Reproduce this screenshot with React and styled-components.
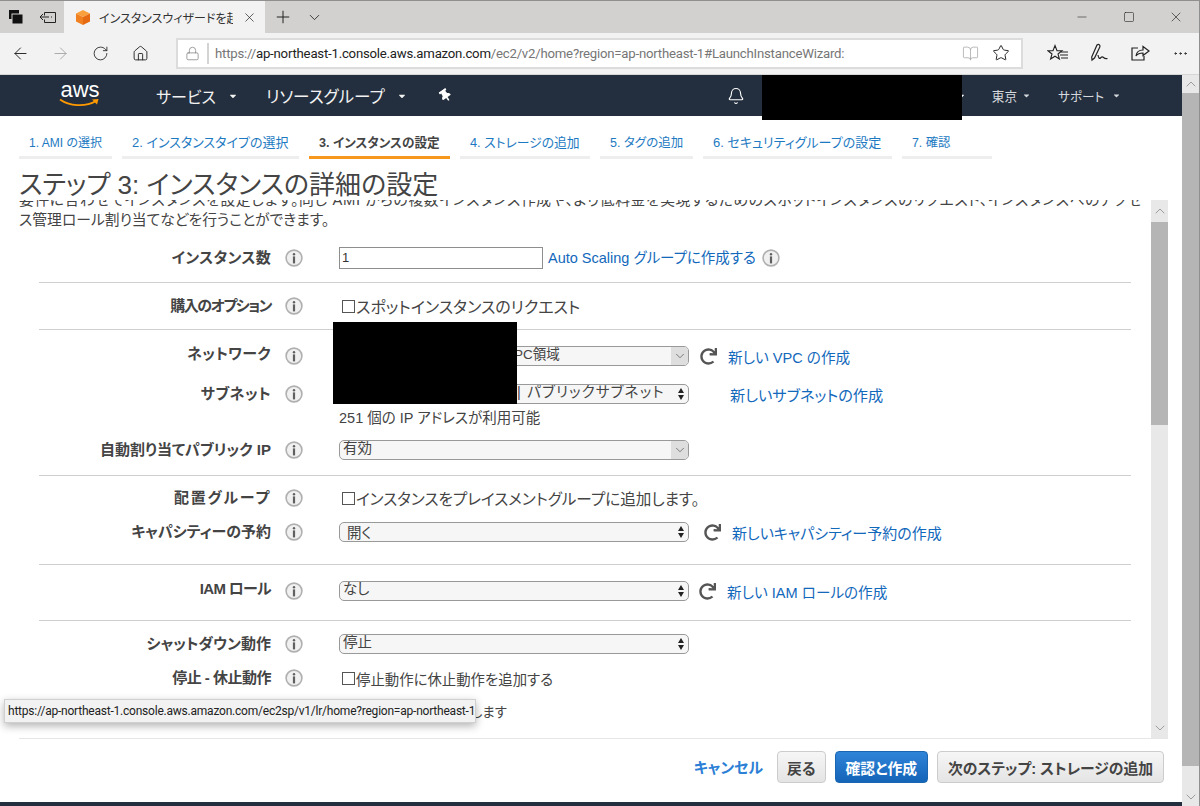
import React from 'react';
import styled, { createGlobalStyle } from 'styled-components';
import {
  ArrowLeft, ArrowRight, RotateCw, Home, Lock, Star, X, Plus, ChevronDown, ChevronUp,
  Minus, Square, MoreHorizontal, BookOpen, Bell,
} from 'lucide-react';
import { FaRedo, FaThumbtack, FaCaretDown } from 'react-icons/fa';

const GlobalStyle = createGlobalStyle`
  html, body {
    margin: 0;
    padding: 0;
    overflow: hidden;
    background: #fff;
  }
  body {
    font-family: "Liberation Sans", "Noto Sans CJK JP", sans-serif;
    font-feature-settings: "palt";
    color: #444;
  }
`;

const Shell = styled.div`
  position: relative;
  width: 1200px;
  height: 806px;
  box-sizing: border-box;
  border-top: 1px solid #8f8f8f;
  border-right: 1px solid #8f8f8f;
  display: flex;
  flex-direction: column;
  overflow: hidden;
`;

const TabStrip = styled.div`
  height: 32px;
  flex: none;
  display: flex;
  align-items: center;
  background: #d2d1cf;
  color: #222;
`;

const StripIcon = styled.div`
  width: ${(p) => p.$w || 32}px;
  height: 32px;
  flex: none;
  display: flex;
  align-items: center;
  justify-content: center;
`;

const ActiveTab = styled.div`
  width: 201px;
  height: 32px;
  flex: none;
  display: flex;
  align-items: center;
  background: #f2f2f2;
  padding-left: 11px;
  box-sizing: border-box;
`;

const TabTitle = styled.div`
  width: 134px;
  margin-left: 8px;
  font-size: 12px;
  white-space: nowrap;
  overflow: hidden;
  color: #333;
`;

const WindowControls = styled.div`
  margin-left: auto;
  display: flex;
`;

const WindowButton = styled.div`
  width: 47px;
  height: 32px;
  display: flex;
  align-items: center;
  justify-content: center;
`;

const Toolbar = styled.div`
  height: 42px;
  flex: none;
  box-sizing: border-box;
  display: flex;
  align-items: center;
  background: #f2f2f2;
  padding: 0 0 1px 0;
  border-bottom: 1px solid #d6d6d6;
  color: #222;
`;

const ToolButton = styled.div`
  width: ${(p) => p.$w || 40}px;
  flex: none;
  display: flex;
  align-items: center;
  justify-content: center;
  color: ${(p) => p.$muted ? '#a8a8a8' : '#222'};
`;

const AddressBar = styled.div`
  width: 847px;
  height: 31px;
  flex: none;
  margin: 0 15px 0 16px;
  box-sizing: border-box;
  background: #fff;
  border: 2px solid #dcdcdc;
  display: flex;
  align-items: center;
`;

const LockBox = styled.div`
  width: 29px;
  height: 21px;
  flex: none;
  border-right: 2px solid #d4d4d4;
  display: flex;
  align-items: center;
  justify-content: center;
  color: #8a8a8a;
`;

const UrlText = styled.div`
  flex: 1;
  margin-left: 6px;
  font-family: "Roboto", sans-serif;
  font-size: 13.2px;
  letter-spacing: -0.22px;
  color: #767676;
  white-space: nowrap;
  b {
    font-weight: 400;
    color: #222;
  }
`;

const Body = styled.div`
  flex: 1;
  min-height: 0;
  display: flex;
`;

const Page = styled.div`
  flex: 1;
  min-width: 0;
  display: flex;
  flex-direction: column;
`;

const ScrollTrack = styled.div`
  width: ${(p) => p.$w}px;
  flex: none;
  background: #e8e8e8;
  display: flex;
  flex-direction: column;
  color: #777;
`;

const ScrollArrow = styled.div`
  height: ${(p) => p.$h}px;
  flex: none;
  display: flex;
  align-items: center;
  justify-content: center;
  margin-top: ${(p) => p.$end ? 'auto' : 0};
`;

const ScrollThumb = styled.div`
  height: ${(p) => p.$h}px;
  flex: none;
  background: #b5b5b5;
`;

const NavBar = styled.nav`
  position: relative;
  height: 41px;
  flex: none;
  display: flex;
  align-items: center;
  background: #232f3e;
  color: #eee;
`;

const Logo = styled.div`
  width: 40px;
  margin: 0 56px 0 60px;
  display: flex;
  flex-direction: column;
  align-items: center;
  color: #fff;
  line-height: 17px;
  font-size: 22px;
  span {
    margin-top: -3px;
  }
`;

const NavItem = styled.div`
  display: flex;
  align-items: center;
  gap: ${(p) => p.$gap || 12}px;
  margin-left: ${(p) => p.$ml || 0}px;
  font-size: ${(p) => p.$small ? 12.6 : 16}px;
  color: ${(p) => p.$small ? '#d5d9dd' : '#f2f2f2'};
  white-space: nowrap;
`;

const ResourceLabel = styled.span`
  font-size: 16.6px;
`;

const NavIcon = styled.div`
  margin-left: ${(p) => p.$ml}px;
  display: flex;
  color: #fff;
  transform: rotate(${(p) => p.$turn || 0}deg);
`;

const Redaction = styled.div`
  position: absolute;
  left: ${(p) => p.$x}px;
  top: ${(p) => p.$y}px;
  width: ${(p) => p.$w}px;
  height: ${(p) => p.$h}px;
  background: #000;
`;

const Steps = styled.div`
  display: flex;
  gap: 10px;
  flex: none;
  margin: 14px 0 0 19px;
`;

const Step = styled.div`
  width: ${(p) => p.$w}px;
  height: 29px;
  box-sizing: border-box;
  padding: 0 0 3px 10px;
  display: flex;
  align-items: center;
  font-size: ${(p) => p.$size}px;
  white-space: nowrap;
  color: ${(p) => p.$active ? '#444' : '#1d7ac2'};
  font-weight: ${(p) => p.$active ? 700 : 400};
  border-bottom: 3px solid ${(p) => p.$active ? '#f7981d' : '#eeeeee'};
`;

const Title = styled.h1`
  position: relative;
  z-index: 1;
  height: 41px;
  flex: none;
  box-sizing: border-box;
  margin: 0 0 0 19px;
  padding-top: 9px;
  font-size: 26px;
  line-height: 34px;
  font-weight: 400;
  color: #444;
  white-space: nowrap;
`;

const Panel = styled.div`
  height: 538px;
  flex: none;
  margin: 0 14px 0 19px;
  display: flex;
  border-bottom: 1px solid #e6e6e6;
`;

const PanelContent = styled.div`
  flex: 1;
  min-width: 0;
  overflow: hidden;
`;

const Description = styled.p`
  margin: -10px 0 0;
  height: 42px;
  font-size: 14.8px;
  line-height: 20px;
  color: #444;
  white-space: nowrap;
`;

const DescriptionLead = styled.span`
  letter-spacing: 0.58px;
`;

const Section = styled.div`
  margin: 0 20px;
  box-sizing: border-box;
  padding-top: ${(p) => p.$top}px;
  height: ${(p) => p.$height}px;
  border-bottom: ${(p) => p.$last ? 'none' : '1px solid #cfcfcf'};
`;

const Row = styled.div`
  display: flex;
  align-items: center;
  height: ${(p) => p.$h || 20}px;
  margin-top: ${(p) => p.$gap || 0}px;
`;

const Label = styled.div`
  width: 232px;
  flex: none;
  text-align: right;
  font-size: 15px;
  font-weight: 700;
  letter-spacing: ${(p) => p.$ls || 0}px;
  color: #444;
  white-space: nowrap;
  margin-bottom: ${(p) => p.$lift || 4}px;
`;

const InfoSlot = styled.div`
  width: ${(p) => p.$w || 68}px;
  flex: none;
  padding-left: ${(p) => p.$pl || 14}px;
  box-sizing: border-box;
  display: flex;
  align-items: center;
`;

const TextInput = styled.div`
  width: 204px;
  height: 22px;
  box-sizing: border-box;
  border: 1px solid #8e8e8e;
  padding-left: 2px;
  font-size: 13px;
  line-height: 20px;
  color: #333;
`;

const LinkText = styled.a`
  color: #1268bb;
  font-size: ${(p) => p.$size || 15}px;
  white-space: nowrap;
  margin-left: ${(p) => p.$ml || 0}px;
  margin-bottom: ${(p) => p.$lift || 0}px;
`;

const Plain = styled.div`
  font-size: 14.5px;
  color: #444;
  white-space: nowrap;
`;

const CheckRow = styled.div`
  display: flex;
  align-items: center;
  margin-left: 3px;
  font-size: ${(p) => p.$size || 15.5}px;
  color: #444;
  white-space: nowrap;
`;

const CheckBox = styled.span`
  width: 13px;
  height: 13px;
  box-sizing: border-box;
  border: 1px solid #555;
  background: #fff;
  margin-right: 1px;
`;

const SelectBox = styled.div`
  width: 350px;
  height: 20px;
  flex: none;
  box-sizing: border-box;
  border: 1px solid #999999;
  border-radius: 5px;
  background: #f6f6f6;
  display: flex;
  align-items: center;
  justify-content: space-between;
  overflow: hidden;
  color: #444;
`;

const SelectValue = styled.span`
  padding-left: ${(p) => p.$indent || 3}px;
  margin-bottom: ${(p) => p.$lift ?? 7}px;
  font-size: ${(p) => p.$size || 14.5}px;
  letter-spacing: ${(p) => p.$ls || 0}px;
  white-space: nowrap;
`;

const ChevronButton = styled.span`
  width: 17px;
  height: 18px;
  flex: none;
  background: #dedede;
  display: flex;
  align-items: center;
  justify-content: center;
  color: #333;
`;

const Spinner = styled.span`
  width: 13px;
  flex: none;
  display: flex;
  flex-direction: column;
  align-items: center;
  gap: 2px;
  margin-right: 1px;
  &::before, &::after {
    content: "";
    border-left: 3.5px solid transparent;
    border-right: 3.5px solid transparent;
  }
  &::before {
    border-bottom: 5px solid #222;
  }
  &::after {
    border-top: 5px solid #222;
  }
`;

const Refresh = styled.span`
  display: flex;
  margin-left: ${(p) => p.$ml}px;
  color: #555;
`;

const Footer = styled.div`
  flex: 1;
  display: flex;
  justify-content: flex-end;
  align-items: flex-start;
  gap: 9px;
  padding: 12px 18px 0 0;
`;

const CancelLink = styled.a`
  align-self: flex-start;
  margin: 5px 5px 0 0;
  color: #2b80d6;
  font-size: 15px;
  font-weight: 700;
`;

const Button = styled.button`
  height: 32px;
  box-sizing: border-box;
  padding: 0 ${(p) => p.$pad}px;
  border-radius: 4px;
  border: 1px solid ${(p) => p.$primary ? '#1a66b0' : '#cccccc'};
  background: ${(p) => p.$primary
    ? 'linear-gradient(#3084d8, #1464b8)'
    : 'linear-gradient(#f6f6f6, #e4e4e4)'};
  color: ${(p) => p.$primary ? '#fff' : '#444'};
  font-family: inherit;
  font-feature-settings: inherit;
  font-size: 14.8px;
  font-weight: 700;
  white-space: nowrap;
`;

const BottomBar = styled.div`
  height: 4px;
  flex: none;
  background: #232f3e;
`;

const StatusTip = styled.div`
  position: absolute;
  left: 4px;
  top: 698px;
  width: 472px;
  height: 24px;
  box-sizing: border-box;
  padding-left: 3px;
  background: #f2f2f2;
  border: 1px solid #d0d0d0;
  box-shadow: 0 3px 8px rgba(0, 0, 0, 0.3);
  font-family: "Roboto", sans-serif;
  font-size: 12px;
  letter-spacing: -0.22px;
  line-height: 22px;
  color: #222;
  white-space: nowrap;
`;

function InfoIcon() {
  return (
    <svg width="18" height="18" viewBox="0 0 18 18">
      <circle cx="9" cy="9" r="7.9" fill="#f0f0f0" stroke="#b0b0b0" strokeWidth="1.6" />
      <circle cx="9" cy="5.200" r="1.2" fill="#5f5f5f" />
      <rect x="7.900" y="7.400" width="2.200" height="7" fill="#5f5f5f" />
    </svg>
  );
}

function Info() {
  return <InfoSlot><InfoIcon /></InfoSlot>;
}

function Select({ children, indent, spinner, size, ls, lift }) {
  return (
    <SelectBox>
      <SelectValue $indent={indent} $size={size} $ls={ls} $lift={lift}>{children}</SelectValue>
      {spinner ? <Spinner /> : <ChevronButton><ChevronDown size={14} strokeWidth={1} /></ChevronButton>}
    </SelectBox>
  );
}

function Check({ children, size }) {
  return <CheckRow $size={size}><CheckBox />{children}</CheckRow>;
}

function Reload({ ml }) {
  return <Refresh $ml={ml}><FaRedo size={17} /></Refresh>;
}

function TabsIcon() {
  return (
    <svg width="16" height="16" viewBox="0 0 16 16">
      <rect x="1" y="1" width="10" height="9" fill="#111" />
      <rect x="4" y="5" width="11" height="10" fill="#111" stroke="#d2d1cf" strokeWidth="1" />
    </svg>
  );
}

function SetAsideIcon() {
  return (
    <svg width="18" height="16" viewBox="0 0 18 16" fill="none" stroke="#222" strokeWidth="1">
      <path d="M5.500 3.500h11v10h-11v-3M5.500 6.500V3.500" />
      <path d="M1 8h9M4 5 1 8l3 3M13 8h-1" />
    </svg>
  );
}

function Cube() {
  return (
    <svg width="16" height="17" viewBox="0 0 16 17">
      <path d="M8 1 15 4.500 8 8 1 4.500Z" fill="#f9a03c" />
      <path d="M1 4.500 8 8v8l-7-3.500Z" fill="#f08020" />
      <path d="M15 4.500 8 8v8l7-3.500Z" fill="#e56a12" />
    </svg>
  );
}

function FavoritesIcon() {
  return (
    <svg width="22" height="20" viewBox="0 0 22 20" fill="none" stroke="#222" strokeWidth="1.1">
      <path d="M8 2.500 10 7.600l5 .2-4 3.200 1.400 5L8 13.200 3.600 16 5 11 1 7.800l5-.2Z" />
      <path d="M14 9h7M13 12h8M14 15h7" />
    </svg>
  );
}

function PenIcon() {
  return (
    <svg width="22" height="20" viewBox="0 0 22 20" fill="none" stroke="#222" strokeWidth="1.2">
      <path d="M8 2c2-1.500 3.500.5 2.800 2L5.500 15 3 17l-.3-3Z" />
      <path d="M9 12c.5 3 1.500 4 2.500 3s2-1.500 3-.5 2 1.500 4 1" />
    </svg>
  );
}

function ShareIcon() {
  return (
    <svg width="20" height="20" viewBox="0 0 20 20" fill="none" stroke="#222" strokeWidth="1.2">
      <path d="M8 5H2v12h12v-4" />
      <path d="M6 13c.5-4 3.500-6 7-6V3.500L19 8l-6 4.500V10c-3 0-5.500.8-7 3Z" />
    </svg>
  );
}

function Smile() {
  return (
    <svg width="42" height="10" viewBox="0 0 42 10" fill="none">
      <path d="M1 1.500C10 8 26 9.500 37 3" stroke="#f90" strokeWidth="1.800" />
      <path d="M33 1.500 39.500 1 38 6.500Z" fill="#f90" />
    </svg>
  );
}

const steps = [
  { text: '1. AMI の選択', w: 93, size: 12 },
  { text: '2. インスタンスタイプの選択', w: 177, size: 13 },
  { text: '3. インスタンスの設定', w: 141, size: 12.6, active: true },
  { text: '4. ストレージの追加', w: 130, size: 12.8 },
  { text: '5. タグの追加', w: 93, size: 12.5 },
  { text: '6. セキュリティグループの設定', w: 189, size: 13 },
  { text: '7. 確認', w: 90, size: 12.3 },
];

export default function App() {
  return (
    <>
      <GlobalStyle />
      <Shell>
        <TabStrip>
          <StripIcon><TabsIcon /></StripIcon>
          <StripIcon $w={32}><SetAsideIcon /></StripIcon>
          <ActiveTab>
            <Cube />
            <TabTitle>インスタンスウィザードを起動</TabTitle>
            <StripIcon $w={32}><X size={15} strokeWidth={1.1} /></StripIcon>
          </ActiveTab>
          <StripIcon $w={36}><Plus size={20} strokeWidth={1.2} /></StripIcon>
          <StripIcon $w={26}><ChevronDown size={17} strokeWidth={1.2} /></StripIcon>
          <WindowControls>
            <WindowButton><Minus size={14} strokeWidth={1} /></WindowButton>
            <WindowButton><Square size={12} strokeWidth={1.2} /></WindowButton>
            <WindowButton><X size={16} strokeWidth={1} /></WindowButton>
          </WindowControls>
        </TabStrip>

        <Toolbar>
          <ToolButton><ArrowLeft size={19} strokeWidth={1.2} /></ToolButton>
          <ToolButton $muted><ArrowRight size={19} strokeWidth={1.2} /></ToolButton>
          <ToolButton><RotateCw size={17} strokeWidth={1.2} /></ToolButton>
          <ToolButton><Home size={17} strokeWidth={1.3} /></ToolButton>
          <AddressBar>
            <LockBox><Lock size={15} strokeWidth={1.3} /></LockBox>
            <UrlText>https://<b>ap-northeast-1.console.aws.amazon.com</b>/ec2/v2/home?region=ap-northeast-1#LaunchInstanceWizard:</UrlText>
            <ToolButton $muted $w={30}><BookOpen size={17} strokeWidth={1.1} /></ToolButton>
            <ToolButton $w={32}><Star size={18} strokeWidth={1.3} /></ToolButton>
            <ToolButton $w={4} />
          </AddressBar>
          <ToolButton $w={40}><FavoritesIcon /></ToolButton>
          <ToolButton $w={44}><PenIcon /></ToolButton>
          <ToolButton $w={36}><ShareIcon /></ToolButton>
          <ToolButton $w={44}><MoreHorizontal size={17} strokeWidth={1.4} /></ToolButton>
        </Toolbar>

        <Body>
          <Page>
            <NavBar>
              <Logo>
                <span>aws</span>
                <Smile />
              </Logo>
              <NavItem>サービス<FaCaretDown size={10} /></NavItem>
              <NavItem $ml={28}><ResourceLabel>リソースグループ</ResourceLabel><FaCaretDown size={10} /></NavItem>
              <NavIcon $ml={32} $turn={-35}><FaThumbtack size={13} /></NavIcon>
              <NavIcon $ml={275}><Bell size={18} strokeWidth={1.5} /></NavIcon>
              <NavIcon $ml={211}><FaCaretDown size={10} /></NavIcon>
              <NavItem $small $ml={26} $gap={5}>東京<FaCaretDown size={9} /></NavItem>
              <NavItem $small $ml={27} $gap={8}>サポート<FaCaretDown size={9} /></NavItem>
              <Redaction $x={762} $y={0} $w={200} $h={45} />
            </NavBar>

            <Steps>
              {steps.map((s) => (
                <Step key={s.text} $w={s.w} $size={s.size} $active={s.active}>{s.text}</Step>
              ))}
            </Steps>

            <Title>ステップ 3: インスタンスの詳細の設定</Title>

            <Panel>
              <PanelContent>
                <Description>
                  <DescriptionLead>要件に合わせてインスタンスを設定します。同じ AMI からの複数インスタンス作成や、より低料金を実現するためのスポットインスタンスのリクエスト、インスタンスへのアクセ</DescriptionLead>
                  <br />
                  ス管理ロール割り当てなどを行うことができます。
                </Description>

                <Section $top={15} $height={51}>
                  <Row $h={22}>
                    <Label $ls={0.3}>インスタンス数</Label>
                    <Info />
                    <TextInput>1</TextInput>
                    <LinkText $ml={5} $size={14.5} $lift={3}>Auto Scaling グループに作成する</LinkText>
                    <InfoSlot $w={24} $pl={6}><InfoIcon /></InfoSlot>
                  </Row>
                </Section>

                <Section $top={13} $height={47}>
                  <Row>
                    <Label $ls={-1.5}>購入のオプション</Label>
                    <Info />
                    <Check size={16}>スポットインスタンスのリクエスト</Check>
                  </Row>
                </Section>

                <Section $top={16} $height={146}>
                  <Row>
                    <Label $lift={8} $ls={0.3}>ネットワーク</Label>
                    <Info />
                    <Select indent={174} size={13.5}>PC領域</Select>
                    <Reload ml={11} />
                    <LinkText $ml={11} $size={14.6}>新しい VPC の作成</LinkText>
                  </Row>
                  <Row $gap={18}>
                    <Label $ls={0.4}>サブネット</Label>
                    <Info />
                    <Select indent={177} ls={1.2} spinner>| パブリックサブネット</Select>
                    <LinkText $ml={41} $size={15.2}>新しいサブネットの作成</LinkText>
                  </Row>
                  <Row $gap={2}>
                    <Label />
                    <InfoSlot />
                    <Plain>251 個の IP アドレスが利用可能</Plain>
                  </Row>
                  <Row $gap={14}>
                    <Label>自動割り当てパブリック IP</Label>
                    <Info />
                    <Select>有効</Select>
                  </Row>
                </Section>

                <Section $top={12} $height={89}>
                  <Row>
                    <Label $ls={1.8}>配置グループ</Label>
                    <Info />
                    <Check size={15.6}>インスタンスをプレイスメントグループに追加します。</Check>
                  </Row>
                  <Row $gap={14}>
                    <Label>キャパシティーの予約</Label>
                    <Info />
                    <Select indent={7} lift={1} spinner>開く</Select>
                    <Reload ml={15} />
                    <LinkText $ml={11}>新しいキャパシティー予約の作成</LinkText>
                  </Row>
                </Section>

                <Section $top={16} $height={56}>
                  <Row>
                    <Label $lift={8} $ls={-0.7}>IAM ロール</Label>
                    <Info />
                    <Select spinner>なし</Select>
                    <Reload ml={10} />
                    <LinkText $ml={11} $size={14.6}>新しい IAM ロールの作成</LinkText>
                  </Row>
                </Section>

                <Section $top={13} $height={116} $last>
                  <Row>
                    <Label>シャットダウン動作</Label>
                    <Info />
                    <Select spinner>停止</Select>
                  </Row>
                  <Row $gap={14}>
                    <Label $ls={-0.5}>停止 - 休止動作</Label>
                    <Info />
                    <Check size={14.4}>停止動作に休止動作を追加する</Check>
                  </Row>
                  <Row $gap={13}>
                    <Label>削除保護の有効化</Label>
                    <Info />
                    <Check size={13.4}>誤った削除から保護します</Check>
                  </Row>
                  <Row $gap={16}>
                    <Label>モニタリング</Label>
                    <Info />
                  </Row>
                </Section>
              </PanelContent>

              <ScrollTrack $w={17}>
                <ScrollArrow $h={22}><ChevronUp size={16} strokeWidth={1} /></ScrollArrow>
                <ScrollThumb $h={203} />
                <ScrollArrow $h={20} $end><ChevronDown size={16} strokeWidth={1} /></ScrollArrow>
              </ScrollTrack>
            </Panel>

            <Footer>
              <CancelLink>キャンセル</CancelLink>
              <Button $pad={9}>戻る</Button>
              <Button $primary $pad={10}>確認と作成</Button>
              <Button $pad={10}>次のステップ: ストレージの追加</Button>
            </Footer>
            <BottomBar />
          </Page>

          <ScrollTrack $w={17}>
            <ScrollArrow $h={18}><ChevronUp size={16} strokeWidth={1} /></ScrollArrow>
            <ScrollThumb $h={673} />
            <ScrollArrow $h={18} $end><ChevronDown size={16} strokeWidth={1} /></ScrollArrow>
          </ScrollTrack>
        </Body>

        <Redaction $x={333} $y={321} $w={184} $h={82} />
        <StatusTip>https://ap-northeast-1.console.aws.amazon.com/ec2sp/v1/lr/home?region=ap-northeast-1</StatusTip>
      </Shell>
    </>
  );
}
